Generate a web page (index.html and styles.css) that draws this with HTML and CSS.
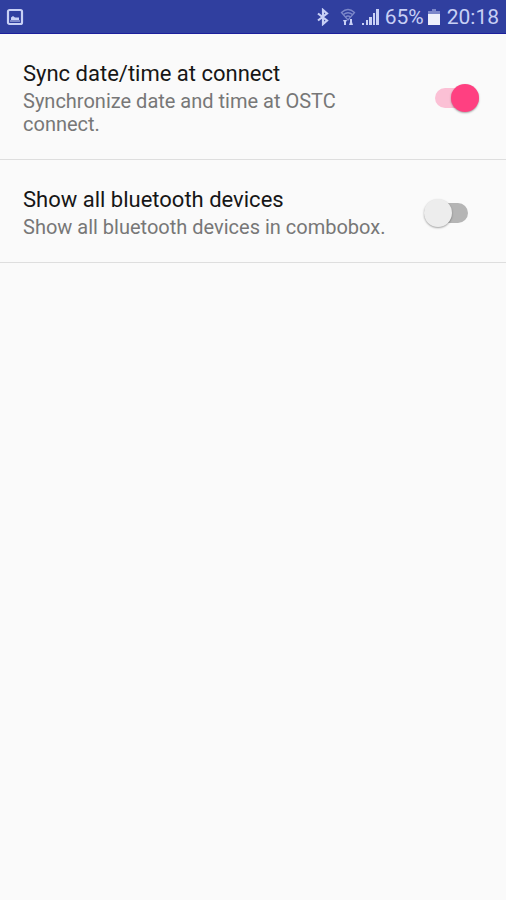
FILE: index.html
```html
<!DOCTYPE html>
<html lang="en">
<head>
<meta charset="utf-8">
<meta name="viewport" content="width=device-width, initial-scale=1">
<title>Settings</title>
<link rel="stylesheet" href="styles.css">
</head>
<body>
<header class="status-bar">
  <svg class="icon-picture" width="18" height="18" viewBox="0 0 18 18" aria-hidden="true">
    <rect x="2" y="2" width="14" height="14" rx="1.5" fill="none" stroke="currentColor" stroke-width="2.200"/>
    <path d="M5 12V9.500l2-1.500 2 1.500h4V12z" fill="currentColor"/>
    <path d="M4 12h10v2H4z" fill="currentColor" opacity=".5"/>
  </svg>
  <div class="indicators">
    <svg width="14" height="18" viewBox="0 0 14 18" aria-hidden="true">
      <path d="M2 5.500l9 7-4 3.500V2l4 3.500-9 7" fill="none" stroke="currentColor" stroke-width="2.200"/>
    </svg>
    <svg class="icon-wifi" width="16" height="18" viewBox="0 0 16 18" aria-hidden="true">
      <g fill="none" stroke="currentColor" stroke-width="1.300" opacity=".5">
        <path d="M1.500 4.500Q8-1.500 14.500 4.500L8 12z"/>
        <path d="M3.500 6.500Q8 3 12.500 6.500M5.500 9Q8 7 10.500 9"/>
      </g>
      <path d="M3 12h4l-1 2v3H4v-3zM9 17h4l-1-3v-3h-2v3z" fill="currentColor"/>
    </svg>
    <svg class="icon-signal" width="18" height="18" viewBox="0 0 18 18" aria-hidden="true">
      <path d="M0 15h2v2H0zM4 12h2v5H4zM7 9h3v8H7zM11 5h2v12h-2zM14 1h3v16h-3z" fill="currentColor"/>
    </svg>
    <span>65%</span>
    <svg class="icon-battery" width="12" height="18" viewBox="0 0 12 18" aria-hidden="true">
      <path d="M4 1h4v2h4v3H0V3h4z" fill="currentColor" opacity=".5"/>
      <path d="M0 6h12v11H0z" fill="#eef0fb"/>
    </svg>
    <time datetime="20:18">20:18</time>
  </div>
</header>
<main>
  <label class="setting">
    <span class="text">
      <span class="title">Sync date/time at connect</span>
      <span class="summary">Synchronize date and time at OSTC connect.</span>
    </span>
    <input class="switch" type="checkbox" role="switch" checked>
  </label>
  <label class="setting setting-wide">
    <span class="text">
      <span class="title">Show all bluetooth devices</span>
      <span class="summary">Show all bluetooth devices in combobox.</span>
    </span>
    <input class="switch" type="checkbox" role="switch">
  </label>
</main>
</body>
</html>
```
FILE: styles.css
```css
* {
  box-sizing: border-box;
}

body {
  margin: 0;
  min-height: 100vh;
  background: #fafafa;
  font-family: Roboto, "Liberation Sans", sans-serif;
}

.status-bar {
  display: flex;
  align-items: center;
  justify-content: space-between;
  height: 34px;
  padding: 1px 7px 0 6px;
  border-bottom: 1px solid #1c1f9c;
  background: #303f9f;
  color: #c8d0f5;
  font-size: 21px;
  line-height: 24px;
}

.indicators {
  display: flex;
  align-items: center;
}

.icon-wifi {
  margin-left: 10px;
}

.icon-signal {
  margin: 0 5px 0 6px;
}

.icon-battery {
  margin: 0 7px 0 4px;
}

.setting {
  display: flex;
  align-items: center;
  justify-content: space-between;
  padding: 26px 27px 23px 23px;
  border-bottom: 1px solid #dedede;
}

.setting-wide {
  padding-right: 38px;
}

.text {
  display: flex;
  flex-direction: column;
  gap: 3px;
  max-width: 372px;
}

.title {
  color: #161616;
  font-size: 22px;
  line-height: 27px;
}

.summary {
  color: #777;
  font-size: 20px;
  line-height: 23px;
}

.switch {
  appearance: none;
  display: flex;
  align-items: center;
  flex: none;
  width: 44px;
  height: 20px;
  margin: 0;
  border-radius: 10px;
  background: #b5b5b5;
}

.switch::before {
  content: "";
  flex: none;
  width: 28px;
  height: 28px;
  border-radius: 50%;
  background: #ededed;
  box-shadow: 0 1px 2px rgba(0, 0, 0, 0.35);
}

.switch:checked {
  justify-content: flex-end;
  background: #fbc0d5;
}

.switch:checked::before {
  background: #ff4081;
}
```
